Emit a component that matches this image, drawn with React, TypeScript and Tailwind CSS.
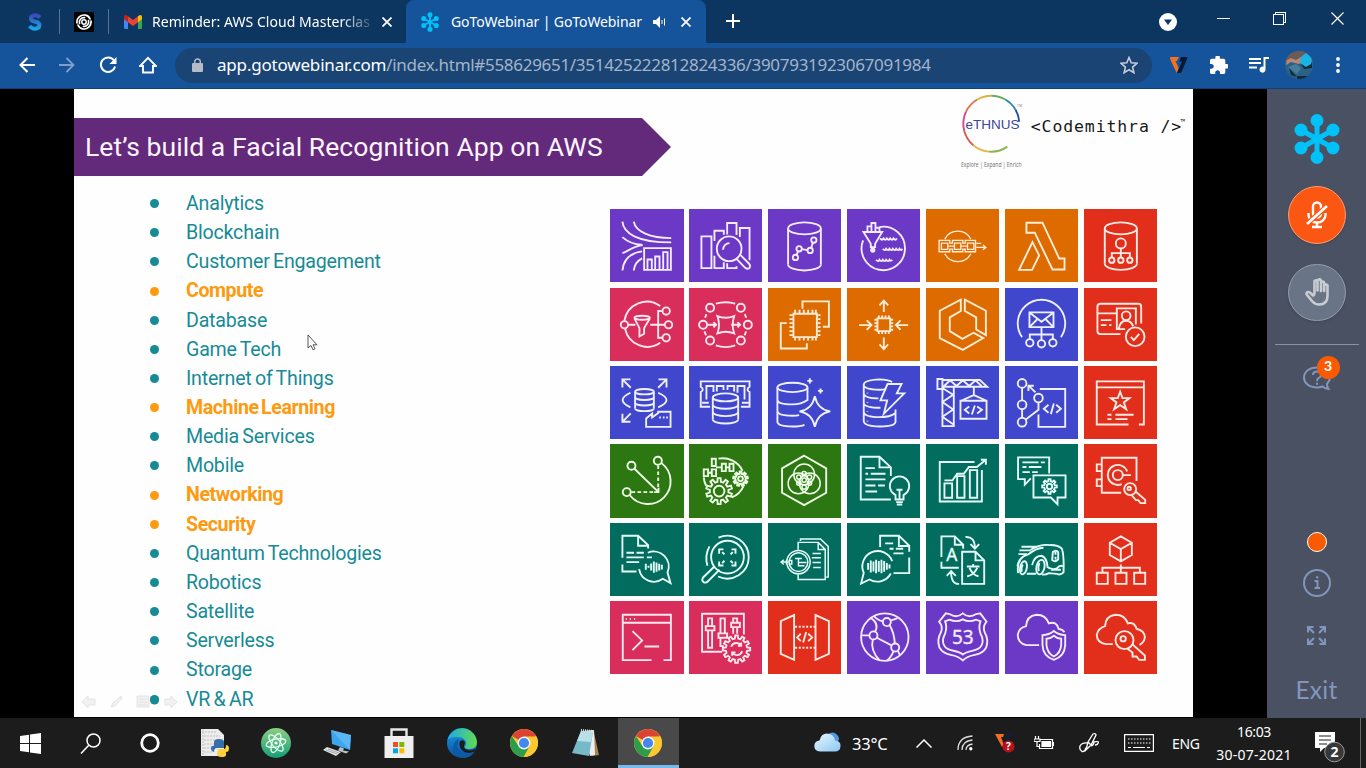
import React from "react";

type Tone = "violet" | "orange" | "red" | "pink" | "blue" | "green" | "teal";

const toneClass: Record<Tone, string> = {
  violet: "bg-[#6c38c6] text-[#f3ebff]",
  orange: "bg-[#dd6b00] text-[#ffedd8]",
  red: "bg-[#e12f1c] text-[#ffeae4]",
  pink: "bg-[#d92d5b] text-[#ffe8f0]",
  blue: "bg-[#4147cc] text-[#eef0ff]",
  green: "bg-[#2d7712] text-[#efffe8]",
  teal: "bg-[#026d5e] text-[#e6fffa]",
};

/** Outline of a toothed wheel. */
function gear(cx: number, cy: number, r: number, R: number, n: number) {
  const pts: string[] = [];
  const step = (Math.PI * 2) / n;
  for (let i = 0; i < n; i++) {
    const a = i * step - Math.PI / 2;
    const corners: [number, number][] = [
      [a - step * 0.3, r],
      [a - step * 0.18, R],
      [a + step * 0.18, R],
      [a + step * 0.3, r],
    ];
    corners.forEach(([t, d]) => pts.push(`${(cx + Math.cos(t) * d).toFixed(1)} ${(cy + Math.sin(t) * d).toFixed(1)}`));
  }
  return `M${pts.join("L")}Z`;
}

/** Database drum with ring lines. */
function Drum({ cx, top, rx, ry, h, rings = 0 }: { cx: number; top: number; rx: number; ry: number; h: number; rings?: number }) {
  const lines: React.ReactNode[] = [];
  for (let i = 1; i <= rings + 1; i++) {
    const y = top + (h * i) / (rings + 1);
    lines.push(<path key={i} d={`M${cx - rx} ${y} A${rx} ${ry} 0 0 0 ${cx + rx} ${y}`} />);
  }
  return (
    <>
      <ellipse cx={cx} cy={top} rx={rx} ry={ry} />
      <path d={`M${cx - rx} ${top}v${h}M${cx + rx} ${top}v${h}`} />
      {lines}
    </>
  );
}

function Dots({ at, r }: { at: [number, number][]; r: number }) {
  return (
    <>
      {at.map(([x, y]) => (
        <circle key={`${x}-${y}`} cx={x} cy={y} r={r} />
      ))}
    </>
  );
}

function Label({ x, y, size, children }: { x: number; y: number; size: number; children: React.ReactNode }) {
  return (
    <text x={x} y={y} fontSize={size} textAnchor="middle" fill="currentColor" stroke="currentColor" strokeWidth="1" fontFamily="Noto Sans, sans-serif">
      {children}
    </text>
  );
}

const P = ({ d }: { d: string }) => <path d={d} />;

const services: { name: string; tone: Tone; x: number; y: number; art: React.ReactNode }[] = [
  {
    name: "Kinesis", tone: "violet", x: 30, y: 28,
    art: (
      <>
        <P d="M67 66C70 100 110 128 213 128M101 66C106 96 150 115 213 115M67 112Q90 133 125 135M67 160C85 154 100 138 128 136M67 212C70 180 90 160 126 155M101 212C103 195 110 184 126 176" />
        <P d="M132 145h80v65h-80zM142 208v-29h13v29M165 208v-38h13v38M189 208v-51h13v51" />
      </>
    ),
  },
  {
    name: "Athena", tone: "violet", x: 270, y: 28,
    art: (
      <>
        <P d="M307 110h30v95h-30zM346 124V93h28v12M346 168v37h28v-18M384 104V70h28v36M384 190v15h28v-6M422 112V85h29v96" />
        <circle cx="390" cy="147" r="37" />
        <P d="M372 150a19 19 0 0 1 19-20M412 177l26 27q7 6 13 0q4-7-2-13l-27-27" />
      </>
    ),
  },
  {
    name: "Redshift", tone: "violet", x: 507, y: 28,
    art: (
      <>
        <Drum cx={616} top={86} rx={49} ry={18} h={108} />
        <Dots r={8} at={[[589, 173], [600, 147], [633, 152], [644, 121]]} />
        <P d="M592 166l5-12M608 148l17 3M636 145l5-16" />
      </>
    ),
  },
  {
    name: "Lake", tone: "violet", x: 741, y: 28,
    art: (
      <>
        <P d="M838 82A65 65 0 1 1 789 122" />
        <P d="M790 97h56l-21 35v10h-13v-10zM802 94V80h12v14M814 80V70h12v24M826 84h12v10M818 142v12" />
        <Dots r={5} at={[[818, 151]]} />
        <P d="M840 116q6 8 10 0q6 8 10 0q6 8 10 0q6 8 10 0q6 8 10 0M848 147q6 8 10 0q6 8 10 0q6 8 10 0q6 8 10 0q6 8 10 0q6 8 8 0M828 180q6 8 10 0q6 8 10 0q6 8 10 0q6 8 10 0q4 6 8 0" />
      </>
    ),
  },
  {
    name: "Managed Blockchain", tone: "orange", x: 138, y: 28,
    art: (
      <g strokeWidth="4">
        <P d="M194 118a44 44 0 0 1 78 0M194 162a44 44 0 0 0 78 0" />
        <P d="M177 122h32v8h8v-8h31v8h7v-8h31v34h-31v-8h-7v8h-31v-8h-8v8h-32z" />
        <P d="M184 130h19v19h-19zM223 130h19v19h-19zM262 130h19v19h-19zM203 139h20M242 139h20M288 143h28m-8-7l9 7-9 7M288 131h15" />
      </g>
    ),
  },
  {
    name: "Lambda", tone: "orange", x: 373, y: 25,
    art: <P d="M437 66h48l50 107h16v33h-36l-53-110h-25zM455 124l20 40-21 43h-39z" />,
  },
  {
    name: "Cloud Directory", tone: "red", x: 609, y: 28,
    art: (
      <>
        <Drum cx={719} top={86} rx={48} ry={18} h={106} />
        <Dots r={15} at={[[719, 131]]} />
        <Dots r={8} at={[[692, 181], [719, 181], [746, 181]]} />
        <P d="M719 146v26M692 172v-12h54v12" />
      </>
    ),
  },
  {
    name: "Pinpoint", tone: "pink", x: 30, y: 264,
    art: (
      <>
        <P d="M180 318A68 68 0 0 0 73 362M75 386A68 68 0 0 0 180 428" />
        <Dots r={11} at={[[73, 374], [198, 333], [205, 374], [198, 413]]} />
        <ellipse cx="126" cy="353" rx="23" ry="6" />
        <P d="M103 355l15 29v25l14-8v-17l17-29M84 374h22M150 374h44M187 333h-13v80h13" />
      </>
    ),
  },
  {
    name: "Step", tone: "pink", x: 270, y: 264,
    art: (
      <>
        <P d="M350 311Q380 302 408 311M350 436Q380 446 408 436M322 342l-4 11M437 342l4 11M321 406l-5-12M436 406l5-12" />
        <Dots r={12} at={[[333, 323], [425, 323], [312, 374], [446, 374], [333, 421], [425, 421]]} />
        <P d="M355 348Q379 358 405 348Q396 374 405 400Q379 390 355 400Q364 374 355 348zM326 374h25m-8-8l8 8-8 8M396 374h27m-8-8l8 8-8 8" />
      </>
    ),
  },
  {
    name: "EC2", tone: "orange", x: 507, y: 262,
    art: (
      <>
        <P d="M583 339h70v70h-70zM610 324v-22h79v76h-18M563 367h-18v76h78v-16" />
        <P d="M588 327v10M601 327v10M614 327v10M627 327v10M640 327v10M650 327v10M588 410v9M601 410v9M614 410v9M627 410v9M640 410v9M650 410v9M571 343h10M571 355h10M571 367h10M571 379h10M571 391h10M571 403h10M655 343h9M655 355h9M655 367h9M655 379h9M655 391h9M655 403h9" />
      </>
    ),
  },
  {
    name: "Auto Scaling", tone: "orange", x: 741, y: 262,
    art: (
      <>
        <P d="M832 353h38v38h-38zM851 334v-33m-13 13l13-14 13 14M851 410v34m-13-13l13 14 13-14M777 373h36m-13-14l14 14-14 14M924 373h-36m13-14l-14 14 14 14" />
        <P d="M836 344v8M846 344v8M856 344v8M866 344v8M836 392v8M846 392v8M856 392v8M866 392v8M823 357h8M823 367h8M823 377h8M823 387h8M871 357h8M871 367h8M871 377h8M871 387h8" />
      </>
    ),
  },
  {
    name: "ECS", tone: "orange", x: 138, y: 262,
    art: <P d="M242 297L179 330V412L248 447L309 412L280 396L247 414L209 391V350L242 331ZM254 297L317 330V403L288 386V350L254 331Z" />,
  },
  {
    name: "Simple Email", tone: "blue", x: 373, y: 265,
    art: (
      <>
        <P d="M424 412A71 71 0 1 1 540 412M446 338h72v44h-72zM446 338l36 28 36-28M446 382l25-25M518 382l-25-25M482 382v38M447 418v-14h69v14" />
        <Dots r={11} at={[[447, 429], [482, 432], [516, 429]]} />
      </>
    ),
  },
  {
    name: "Identity", tone: "red", x: 609, y: 262,
    art: (
      <>
        <P d="M718 400h-60q-9 0-9-9V318q0-9 9-9h113q9 0 9 9v50M649 338h56M732 385h-25v-62h57v48M659 358h32M659 373h17M684 373h7" />
        <P d="M713 385q3-25 22-25q15 0 21 17M749 408l9 10 16-19" />
        <Dots r={13} at={[[735, 345]]} />
        <Dots r={28} at={[[762, 408]]} />
      </>
    ),
  },
  {
    name: "Timestream", tone: "blue", x: 33, y: 498,
    art: (
      <>
        <P d="M70 562V538h24M70 538l25 25M202 562V538h-24M202 538l-25 25M70 641v24h24M70 665l25-25M94 578q-47 22 0 44M177 578q50 22 0 44M141 680v-25l18-15v12l18-13v-4h37v45z" />
        <Drum cx={136} top={575} rx={28} ry={8} h={50} rings={2} />
        <P d="M180 652h5M191 652h5M201 652h5" />
      </>
    ),
  },
  {
    name: "ElastiCache", tone: "blue", x: 270, y: 496,
    art: (
      <>
        <P d="M333 618h-28v-44q12-8 0-16v-16h146v16q-12 8 0 16v44h-26M309 606h20M428 606h20" />
        <P d="M322 596v-40h21v18M353 572v-16h20v12M385 568v-12h20v16M415 576v-20h21v40" />
        <Drum cx={379} top={590} rx={38} ry={12} h={66} rings={2} />
      </>
    ),
  },
  {
    name: "Aurora", tone: "blue", x: 507, y: 498,
    art: (
      <>
        <ellipse cx="580" cy="562" rx="45" ry="14" />
        <P d="M535 562v102q0 15 45 15q25 0 36-5M625 562v40M535 598q0 15 45 15q26 0 45-13M535 632q0 15 45 15q12 0 20-2" />
        <P d="M647 588q8 40 46 46q-38 6-46 46q-8-40-46-46q38-6 46-46zM632 535v15M624.500 542.500h15M664 565v15M656.500 572.500h15" />
      </>
    ),
  },
  {
    name: "DynamoDB", tone: "blue", x: 741, y: 498,
    art: (
      <>
        <P d="M876 546q-14-8-38-8q-47 2-47 16t47 15q10 0 20-2M791 554v110q2 15 48 15q47 0 47-15v-36M791 581q2 14 44 14M791 609q2 14 50 14M791 636q2 15 48 15q30 0 47-12" />
        <P d="M862 552h42l-14 28h22l-61 61 10-40h-20z" />
        <P d="M802 578v2M802 606v2M802 634v2M802 662v2" />
      </>
    ),
  },
  {
    name: "Cloud9", tone: "blue", x: 138, y: 496,
    art: (
      <>
        <P d="M172 535h15v30h-15zM187 538h112l22 20H187M192 556l18-17 19 17 19-17 19 17 19-17 18 17M187 558v118h34V558M187 562l32 20-32 22 32 22-32 22 32 22M281 560v24M243 600l38-17 38 17M241 600h78v54h-78z" />
        <P d="M267 617l-13 10 13 11M291 617l14 10-14 11M284 614l-9 27" />
      </>
    ),
  },
  {
    name: "Pipeline", tone: "blue", x: 373, y: 501,
    art: (
      <>
        <Dots r={13} at={[[424, 553], [424, 617], [424, 669], [473, 597]]} />
        <P d="M424 566v38M424 630v26M473 610v22l-38 29M464 580l-19-19M443 576v-16h16M477 570h76v113h-80v-37" />
        <P d="M503 617l-14 12 14 12M526 617l14 12-14 12M519 613l-9 32" />
      </>
    ),
  },
  {
    name: "Artifact", tone: "red", x: 609, y: 501,
    art: (
      <P d="M742 676h-95V547h141v129h-15M647 565h141M717 578l7 19h21l-17 13 7 20-18-12-18 12 7-20-17-13h21zM679 647h12M703 647h54M679 660h12M703 660h36" />
    ),
  },
  {
    name: "Route", tone: "green", x: 33, y: 12,
    art: (
      <>
        <Dots r={12} at={[[97, 77], [176, 62], [83, 156]]} />
        <P d="M106 86l72 70M178 143v13h-13M188 70A68 68 0 1 1 93 166" />
        <path strokeDasharray="11 7" d="M177 76v66M97 156h66" />
      </>
    ),
  },
  {
    name: "OpsWorks", tone: "green", x: 270, y: 12,
    art: (
      <>
        <P d="M338 56h12v22h-12zM314 88h13v20h-13zM338 88h13v20h-13zM368 71h12v22h-12zM391 71h12v22h-12z" />
        <P d="M358 56A66 66 0 0 1 430 92M314 112q1 14 7 25M433 138A66 66 0 0 1 398 172M351 82h16M328 98h10M380 82h10" />
        <P d={gear(360, 153, 28, 39, 10)} />
        <Dots r={16} at={[[360, 153]]} />
        <P d={gear(424, 116, 15, 22, 9)} />
        <Dots r={7} at={[[424, 116]]} />
      </>
    ),
  },
  {
    name: "Robotics", tone: "green", x: 507, y: 15,
    art: (
      <>
        <P d="M615 50l66 38v73l-66 37-66-37V88z" />
        <g strokeWidth="4.400">
          <Dots r={31} at={[[615, 106], [598, 133], [632, 133]]} />
          <Dots r={6.500} at={[[615, 104], [599, 114], [631, 114], [599, 132], [631, 132], [615, 144], [615, 123]]} />
        </g>
      </>
    ),
  },
  {
    name: "Personalize", tone: "teal", x: 741, y: 12,
    art: (
      <>
        <P d="M872 178h-90V50h56l34 32v26M838 50v32h34M796 84h28M796 101h8M812 101h44M796 118h60M796 136h30M834 136h20M796 154h35" />
        <P d="M886 178v-13q-17-10-17-27a29 29 0 0 1 58 0q0 17-17 27v13zM888 186h20M890 193h16M898 176v-27M889 149h18" />
      </>
    ),
  },
  {
    name: "Forecast", tone: "teal", x: 138, y: 12,
    art: (
      <P d="M283 66H179v118h126V90M193 130h23v43h-23zM231 108h22v65h-22zM269 90h22v83h-22zM193 121h24l14-20h20l15-20h24l26-21M302 59h15v15" />
    ),
  },
  {
    name: "Lex", tone: "teal", x: 375, y: 15,
    art: (
      <>
        <P d="M452 118l-18 19v-17h-20V55h93v48M427 70h48M482 70h12M427 84h12M446 84h38M427 99h22M456 99h17M460 109h96v66h-24v20l-20-20h-52z" />
        <P d={gear(508, 142, 16, 22, 8)} />
        <Dots r={8} at={[[508, 142]]} />
      </>
    ),
  },
  {
    name: "Secrets", tone: "red", x: 609, y: 17,
    art: (
      <>
        <P d="M720 163h-58V58h104v70M662 78h-15v20h15M662 123h-15v20h15M738 99A30 30 0 1 0 722 137M724 110h25M764 160l28 24v10h-14l-7-9-7 0-12-14" />
        <Dots r={15} at={[[710, 110]]} />
        <Dots r={18} at={[[747, 152]]} />
        <Dots r={5} at={[[744, 150]]} />
      </>
    ),
  },
  {
    name: "Transcribe", tone: "teal", x: 30, y: 252,
    art: (
      <>
        <P d="M67 356V290h47l30 28v10M114 290v30h30M67 376v21h42M79 341h23M109 341h22M79 355h52M140 355h15M79 369h38" />
        <P d="M143 341A45 45 0 0 1 202 400l9 32-23-13A45 45 0 0 1 117 390" />
        <P d="M137 374v18M145 380v6M153 373v21M161 367v34M169 370v28M177 374v20M185 377v14" />
      </>
    ),
  },
  {
    name: "Rekognition", tone: "teal", x: 270, y: 248,
    art: (
      <>
        <Dots r={49} at={[[385, 350]]} />
        <P d="M358 292A64 64 0 1 1 357 408M331 318Q316 346 325 376M345 379l-33 32q-6 9 3 15q7 2 12-4l34-34" />
        <P d="M360 340v-13h13M397 327h12v13M360 363v12h13M397 375h12v-12M369 335l7 7M401 335l-7 7M369 368l7-7M401 368l-7-7" />
      </>
    ),
  },
  {
    name: "Textract", tone: "teal", x: 507, y: 246,
    art: (
      <g strokeWidth="4.400">
        <P d="M597 326V304h60l21 21v90h-81v-16M604 300v-6h60l23 22v92h-7M657 304v21h21" />
        <Dots r={35} at={[[598, 363]]} />
        <Dots r={28} at={[[598, 363]]} />
        <P d="M640 337h25M638 350h27M640 364h25M642 379h23M588 352h20M598 352v22M600 364h22M596 374h20M546 363h22M554 356l-8 7 8 7M562 356v14M568 358h10v11h-10" />
      </g>
    ),
  },
  {
    name: "Polly", tone: "teal", x: 741, y: 250,
    art: (
      <>
        <P d="M840 322V288h56l31 30v18M896 288v31h31M927 353v47h-47M855 311h24M868 327h12M887 327h22M880 341h30" />
        <P d="M872 401A46 46 0 0 1 808 419l-25 12 8-32A46 46 0 1 1 876 364" />
        <P d="M804 370v20M812 362v36M820 365v30M828 360v40M836 364v32M844 360v40M852 364v32M860 370v20M868 374v12" />
      </>
    ),
  },
  {
    name: "Translate", tone: "teal", x: 138, y: 248,
    art: (
      <>
        <P d="M184 350V288h40l25 25v12M224 288v25h25M184 364v18h52M246 334h40l26 26v70h-66zM286 334v26h26" />
        <P d="M256 290q28-2 28 32m-13-11l13 14 13-14M237 430q-24 2-24-36m-13 12l13-14 14 14" />
        <P d="M260 378h38M279 371v7M268 382q8 20 27 26M291 382q-8 20-30 26" />
        <Label x={215} y={361} size={52}>A</Label>
      </>
    ),
  },
  {
    name: "DeepRacer", tone: "teal", x: 375, y: 248,
    art: (
      <>
        <P d="M424 319h46M418 330h34M415 341h26M452 328Q480 310 510 314Q535 314 545 325Q552 345 550 396Q540 406 530 400L506 398Q496 404 486 402M414 398Q408 352 444 342Q470 322 490 322M412 378q4-22 16-28" />
        <ellipse cx="430" cy="382" rx="10" ry="20" transform="rotate(12 430 382)" />
        <ellipse cx="481" cy="380" rx="12" ry="22" transform="rotate(12 481 380)" />
        <P d="M428 372q-6 10-3 22M478 368q-6 12-2 24M456 374Q462 346 484 346Q500 352 502 378M518 335q10-8 16 0v22q-8 10-18 2zM526 335v8M526 349v8M500 378q14 12 30 6q10-12 18-6M440 400h28M512 388h30" />
      </>
    ),
  },
  {
    name: "Organizations", tone: "red", x: 612, y: 248,
    art: (
      <P d="M722 288l33 19v37l-33 19-33-19v-37zM689 307l33 19 33-19M722 326v37M722 372v25M667 397v-15h112v15M650 397h33v33h-33zM706 397h33v33h-33zM762 397h33v33h-33z" />
    ),
  },
  {
    name: "CLI", tone: "pink", x: 33, y: 485,
    art: <P d="M157 662H71V526h144v136h-22M71 550h144M80 539h3M92 539h3M105 539h3M100 575l29 28-29 29M136 621h44" />,
  },
  {
    name: "Config", tone: "pink", x: 270, y: 485,
    art: (
      <>
        <P d="M369 637h-60V523h125v62M327 560v-23h12v23M327 573v52h12v-52M320 560h26v13h-26zM364 582v-45h13v45M364 595v25h10M358 582h26v13h-26zM402 550v-13h12v13M402 563v20M414 563v20M396 550h26v13h-26z" />
        <P d={gear(412, 629, 32, 41, 12)} />
        <P d="M396 622a17 17 0 0 1 30-4m0-9v10h-10M429 635a17 17 0 0 1-30 5m0 9v-10h10" />
      </>
    ),
  },
  {
    name: "API Gateway", tone: "red", x: 507, y: 485,
    art: (
      <>
        <P d="M545 545l40-18v134l-40-18zM689 545l-40-18v134l40-18z" />
        <path strokeDasharray="6 5" d="M588 562h60M588 625h60" />
        <P d="M605 583l-11 11 11 11M627 583l12 11-12 11M621 578l-9 31" />
      </>
    ),
  },
  {
    name: "CloudFront", tone: "violet", x: 741, y: 485,
    art: (
      <>
        <Dots r={71} at={[[854, 593]]} />
        <Dots r={12} at={[[820, 588], [860, 548], [885, 624]]} />
        <P d="M783 588h25M825 577Q838 552 812 536M830 595l44 23M868 557Q882 580 884 612M818 600Q810 632 838 662M870 544Q884 540 892 536M880 636Q872 655 860 664M848 546Q830 542 822 530M893 634l6 12" />
      </>
    ),
  },
  {
    name: "Route 53", tone: "violet", x: 138, y: 485,
    art: (
      <>
        <P d="M248 522Q230 538 208 524L197 522L177 547Q190 562 182 580Q170 600 178 624Q188 642 212 646Q236 650 248 663Q260 650 284 646Q308 642 318 624Q326 600 314 580Q306 562 319 547L300 522L288 524Q266 538 248 522Z" />
        <P d="M248 540Q230 550 208 541L195 546Q202 562 195 583Q184 602 192 618Q198 630 220 634Q240 638 248 645Q256 638 276 634Q298 630 304 618Q312 602 301 583Q294 562 301 546L288 541Q266 550 248 540Z" />
        <Label x={248} y={613} size={57}>53</Label>
      </>
    ),
  },
  {
    name: "Shield", tone: "violet", x: 378, y: 485,
    art: (
      <P d="M480 617H442Q416 612 416 586Q420 564 441 560Q442 530 472 526Q500 526 509 552Q532 544 538 568Q550 570 556 578M524 575q14 12 34 12v30q-2 34-34 44q-32-10-34-44v-30q20 0 34-12zM524 589q10 9 22 9v19q-2 24-22 34q-20-10-22-34v-19q12 0 22-9z" />
    ),
  },
  {
    name: "Cloud Key", tone: "red", x: 612, y: 483,
    art: (
      <>
        <P d="M698 612H678Q650 608 650 584Q654 564 675 558Q676 528 706 524Q734 524 743 550Q762 544 769 566Q794 572 794 592Q792 608 778 614M756 612l38 34v13h-17l-8-10h-12v-12l-15-11" />
        <Dots r={27} at={[[733, 600]]} />
        <Dots r={8} at={[[729, 596]]} />
      </>
    ),
  },
];

const topics: [string, boolean?][] = [
  ["Analytics"], ["Blockchain"], ["Customer Engagement"], ["Compute", true], ["Database"], ["Game Tech"],
  ["Internet of Things"], ["Machine Learning", true], ["Media Services"], ["Mobile"], ["Networking", true],
  ["Security", true], ["Quantum Technologies"], ["Robotics"], ["Satellite"], ["Serverless"], ["Storage"], ["VR & AR"],
];

function GoToMark({ className }: { className: string }) {
  return (
    <svg viewBox="0 0 46 50" className={className} fill="#00c2f8" stroke="#00c2f8">
      <path d="M23 8v34M7 16l32 18M39 16L7 34" strokeWidth="5" />
      <g stroke="none">
        <circle cx="23" cy="6.500" r="6.500" />
        <circle cx="23" cy="43.500" r="6.500" />
        <circle cx="7" cy="16" r="6.500" />
        <circle cx="39" cy="16" r="6.500" />
        <circle cx="7" cy="34" r="6.500" />
        <circle cx="39" cy="34" r="6.500" />
      </g>
    </svg>
  );
}

function Chrome({ className }: { className: string }) {
  return (
    <svg viewBox="0 0 28 28" className={className}>
      <circle cx="14" cy="14" r="14" fill="#fbc92f" />
      <path d="M14 14L1.900 7A14 14 0 0 1 26.100 7z" fill="#dc4335" />
      <path d="M1.900 7A14 14 0 0 0 13.500 28L19.500 17.500 14 14 8.500 17z" fill="#2d9d4b" />
      <path d="M14 7.500h12.300A14 14 0 0 1 14 28l5.700-10.500z" fill="#fbc92f" />
      <circle cx="14" cy="14" r="6.500" fill="#f5f5f5" />
      <circle cx="14" cy="14" r="5.100" fill="#4688ea" />
    </svg>
  );
}

function TabStrip() {
  return (
    <div className="flex h-[43px] items-center bg-[#0c355f] text-[12px] text-white">
      <svg viewBox="0 0 14 18" className="ml-[28px] h-[18px] w-[14px]">
        <defs>
          <linearGradient id="s" x2="0" y2="1">
            <stop offset="0" stopColor="#3a4bb8" />
            <stop offset="1" stopColor="#19a5e6" />
          </linearGradient>
        </defs>
        <path d="M12 4.500Q10 2 6.500 2.300Q2.500 3 3 6Q3.500 8 7 8.500Q11.500 9.500 11.500 12Q11 15.500 7 15.700Q4 15.800 1.500 13" fill="none" stroke="url(#s)" strokeWidth="4" />
      </svg>
      <div className="ml-[17px] h-[25px] w-px bg-[#5b7390]" />
      <div className="ml-[14px] flex h-[20px] w-[20px] items-center justify-center bg-black">
        <svg viewBox="0 0 16 16" className="h-4 w-4" fill="none" stroke="#fff" strokeWidth="1.700" strokeLinecap="round">
          <path d="M1 9A7 7 0 0 1 9.500 1.200Q13 2 14 5M15 7A7 7 0 0 1 6.500 14.800Q3 14 2 11" />
          <path d="M3.500 9.500A4.600 4.600 0 0 1 8.500 3.600M12.500 6.500A4.600 4.600 0 0 1 7.500 12.400" />
          <circle cx="8" cy="8" r="2.200" strokeWidth="1.500" />
        </svg>
      </div>
      <div className="ml-[14px] h-[25px] w-px bg-[#5b7390]" />
      <svg viewBox="0 0 18 14" className="ml-[15px] h-[14px] w-[18px]">
        <path d="M0 2v10.500Q0 14 1.500 14H4V4z" fill="#4285f4" />
        <path d="M18 2v10.500Q18 14 16.500 14H14V4z" fill="#34a853" />
        <path d="M14 1.200L15.500 .3Q18-.5 18 2.300V4l-4 3.200z" fill="#fbbc04" />
        <path d="M4 1.200L2.500 .3Q0-.5 0 2.300V4l4 3.200z" fill="#c5221f" />
        <path d="M4 1.200l5 3.800 5-3.800v6L9 11 4 7.200z" fill="#ea4335" />
      </svg>
      <div className="ml-[10px] w-[219px] overflow-hidden whitespace-nowrap font-['Noto_Sans',sans-serif] text-[14px] tracking-[0.040px] [mask-image:linear-gradient(to_right,black_86%,transparent_103%)]">
        Reminder: AWS Cloud Masterclas
      </div>
      <svg viewBox="0 0 10 10" className="ml-[11px] h-[10px] w-[10px]" stroke="#fff" strokeWidth="1.800">
        <path d="M.5 .5l9 9M9.500 .5l-9 9" />
      </svg>
      <div className="ml-[14px] flex h-full w-[300px] items-center rounded-t-[8px] bg-[#15539b]">
        <GoToMark className="ml-[15px] h-[20px] w-[18px]" />
        <span className="ml-[12px] w-[192px] whitespace-nowrap font-['Noto_Sans',sans-serif] text-[14px] tracking-[-0.090px]">GoToWebinar | GoToWebinar</span>
        <svg viewBox="0 0 13 12" className="ml-[10px] h-[12px] w-[13px]" fill="#fff">
          <path d="M0 4h3l4-4v12L3 8H0z" />
          <path d="M9 4v4M11.500 2.500v7" stroke="#fff" strokeWidth="1" />
        </svg>
        <svg viewBox="0 0 10 10" className="ml-[15px] h-[10px] w-[10px]" stroke="#fff" strokeWidth="1.800">
          <path d="M.5 .5l9 9M9.500 .5l-9 9" />
        </svg>
      </div>
      <svg viewBox="0 0 14 14" className="ml-[20px] mb-px h-[14px] w-[14px]" stroke="#fff" strokeWidth="2">
        <path d="M7 0v14M0 7h14" />
      </svg>
      <svg viewBox="0 0 18 18" className="ml-auto h-[18px] w-[18px]">
        <circle cx="9" cy="9" r="9" fill="#fff" />
        <path d="M5 6.500h8l-4 5.500z" fill="#0c355f" />
      </svg>
      <div className="ml-[40px] mb-[6px] h-px w-[13px] bg-white" />
      <svg viewBox="0 0 13 13" className="ml-[43px] mb-[6px] h-[13px] w-[13px]" fill="none" stroke="#fff" shapeRendering="crispEdges">
        <path d="M.5 2.500h10v10h-10zM2.500 2.500v-2h10v10h-2" />
      </svg>
      <svg viewBox="0 0 13 13" className="ml-[45px] mr-[22px] mb-[6px] h-[13px] w-[13px]" stroke="#fff" strokeWidth="1.200">
        <path d="M.5 .5l12 12M12.500 .5l-12 12" />
      </svg>
    </div>
  );
}

function Toolbar() {
  return (
    <div className="flex h-[46px] items-center border-b border-[#123f78] bg-[#15539b] pb-px">
      <svg viewBox="0 0 16 16" className="ml-[19px] h-4 w-4" fill="none" stroke="#fff" strokeWidth="2">
        <path d="M16 8H1.500M8.500 1L1.500 8l7 7" />
      </svg>
      <svg viewBox="0 0 16 16" className="ml-[24px] h-4 w-4" fill="none" stroke="#7f9fca" strokeWidth="1.800">
        <path d="M0 8h14.500M7.500 1l7 7-7 7" />
      </svg>
      <svg viewBox="0 0 18 18" className="ml-[24px] h-[18px] w-[18px]" fill="none" stroke="#fff" strokeWidth="2">
        <path d="M15 4.500A7.200 7.200 0 1 0 16.100 10.500" />
        <path d="M17.500 1v7h-7z" fill="#fff" stroke="none" />
      </svg>
      <svg viewBox="0 0 18 18" className="ml-[22px] h-[18px] w-[18px]" fill="none" stroke="#fff" strokeWidth="1.900">
        <path d="M1 10h3v6.500h10V10h3L9 1.800z" />
      </svg>
      <div className="ml-[18px] flex h-[35px] w-[977px] items-center rounded-full bg-[#1a4474]">
        <svg viewBox="0 0 11 14" className="ml-[17px] h-[14px] w-[11px]">
          <rect y="5" width="11" height="9" rx="1" fill="#b5bcc6" />
          <path d="M2.700 6V3.800a2.800 2.800 0 0 1 5.600 0V6" fill="none" stroke="#b5bcc6" strokeWidth="1.500" />
        </svg>
        <div className="ml-[14px] whitespace-nowrap font-['Noto_Sans',sans-serif] text-[17px] tracking-[-0.300px] text-[#a3b4c9]">
          <span className="tracking-[-0.190px] text-white">app.gotowebinar.com</span>/index.html#558629651/351425222812824336/3907931923067091984
        </div>
        <svg viewBox="0 0 18 18" className="ml-auto mr-[14px] h-[18px] w-[18px]" fill="none" stroke="#c6ccd5" strokeWidth="1.600">
          <path d="M9 1.500l2.200 5.300 5.700.5-4.300 3.800 1.300 5.600L9 13.700l-4.900 3 1.300-5.600L1.100 7.300l5.700-.5z" />
        </svg>
      </div>
      <svg viewBox="0 0 18 16" className="ml-[18px] h-4 w-[18px]">
        <path d="M0 1q0-1 1-1h8L7 4H5.500l3.200 7-2 5L.5 3z" fill="#f37021" />
        <path d="M11 0h5.500Q18 0 17 2l-5.500 13q-1 1.500-2.500 1H7l5-11.500h-2.500z" fill="#071a33" />
      </svg>
      <svg viewBox="2 2 20 20" className="ml-[22px] h-[18px] w-[18px]" fill="#fff">
        <path d="M20.500 11H19V7c0-1.100-.9-2-2-2h-4V3.500C13 2.120 11.880 1 10.500 1S8 2.120 8 3.500V5H4c-1.100 0-1.990.9-1.990 2v3.800H3.500c1.490 0 2.700 1.210 2.700 2.700s-1.210 2.700-2.700 2.700H2V20c0 1.100.9 2 2 2h3.800v-1.500c0-1.490 1.210-2.700 2.700-2.700 1.490 0 2.700 1.210 2.700 2.700V22H17c1.100 0 2-.9 2-2v-4h1.500c1.380 0 2.500-1.120 2.500-2.500S21.880 11 20.500 11z" />
      </svg>
      <svg viewBox="0 0 20 16" className="ml-[21px] h-4 w-5" fill="#fff">
        <path d="M0 1h12v2H0zM0 5h12v2H0zM0 9.500h8v2H0zM14.500 0H20v2h-3.500v10.500a3 3 0 1 1-2-2.700z" />
      </svg>
      <svg viewBox="0 0 28 28" className="ml-[16px] h-7 w-7">
        <clipPath id="av"><circle cx="14" cy="14" r="14" /></clipPath>
        <g clipPath="url(#av)">
          <path fill="#2d6288" d="M0 0h28v28H0z" />
          <path fill="#6d5a58" d="M0 0h28v11H0z" />
          <path fill="#ba8775" d="M2 9l4-2 5 2 5-3 3 4-5 3-8-2-5 3z" />
          <path fill="#102c3b" d="M16 13l11-1v5l-8 1zM4 17l8 9-6-2zM12 25h12v3H12z" />
          <path fill="#1ab4e4" d="M16 6l5-4 6 5-1 6-5 3-6-4z" />
          <path fill="#5587a4" d="M3 16l8-3 5 4-4 6z" opacity=".7" />
        </g>
      </svg>
      <svg viewBox="0 0 4 16" className="ml-[23px] h-4 w-1" fill="#fff">
        <circle cx="2" cy="2" r="1.900" /><circle cx="2" cy="8" r="1.900" /><circle cx="2" cy="14" r="1.900" />
      </svg>
    </div>
  );
}

function EthnusLogo() {
  const arcs: [number, number, string][] = [
    [55, 95, "#8fb64c"], [95, 130, "#e7b64a"], [130, 165, "#dc5a55"], [165, 205, "#cf4b86"], [205, 240, "#e1704c"],
    [240, 270, "#d9b540"], [270, 300, "#68ab62"], [300, 330, "#2b89ae"], [330, 356, "#274f99"],
  ];
  const at = (a: number) => {
    const t = (a * Math.PI) / 180;
    return `${(30.3 + 28 * Math.cos(t)).toFixed(2)} ${(28.7 + 28 * Math.sin(t)).toFixed(2)}`;
  };
  return (
    <svg viewBox="0 0 64 80" className="h-[80px] w-[64px] overflow-visible">
      {arcs.map(([a, b, c]) => (
        <path key={a} d={`M${at(a)}A28 28 0 0 1 ${at(b)}`} fill="none" stroke={c} strokeWidth="1.900" />
      ))}
      <text x="4.500" y="33.500" fontSize="12" textLength="54" lengthAdjust="spacingAndGlyphs" fill="#39479b" fontFamily="Liberation Sans, sans-serif">eTHNUS</text>
      <text x="56" y="12" fontSize="3.500" fill="#888" fontFamily="Liberation Sans, sans-serif">TM</text>
      <text x="0" y="72" fontSize="6.600" textLength="60.500" lengthAdjust="spacingAndGlyphs" fill="#6d6d6d" fontFamily="Open Sans, sans-serif">Explore | Expand | Enrich</text>
    </svg>
  );
}

function Slide() {
  return (
    <div className="relative flex h-full w-[1119px] flex-col bg-[#fefefe] font-['Roboto',sans-serif]">
      <div className="flex h-[99px]">
        <div className="mt-[29px] flex h-[58px] w-[597px] items-center bg-[#63297a] pl-[11px] [clip-path:polygon(0_0,568px_0,100%_50%,568px_100%,0_100%)]">
          <h1 className="whitespace-nowrap text-[26.500px] tracking-[0.070px] text-[#fbf4fd]">Let’s build a Facial Recognition App on AWS</h1>
        </div>
        <div className="ml-auto mr-[8px] flex pt-[6px]">
          <EthnusLogo />
          <div className="ml-[6px] flex h-[64px] items-center whitespace-nowrap font-['DejaVu_Sans_Mono',monospace] text-[16.500px] tracking-[0.880px] text-[#181818]">
            &lt;Codemithra /&gt;
            <span className="-ml-[2px] mb-[12px] text-[4px] tracking-[0]">TM</span>
          </div>
        </div>
      </div>
      <div className="flex">
        <ul className="w-[536px] pt-px text-[19.600px]">
          {topics.map(([name, hot]) => (
            <li key={name} className={hot ? "flex h-[29.170px] items-center text-[#fd9a10]" : "flex h-[29.170px] items-center text-[#168b96]"}>
              <span className="ml-[76px] h-[9px] w-[9px] rounded-full bg-current" />
              <span className={hot ? "ml-[27px] whitespace-nowrap font-bold tracking-[-0.420px] [word-spacing:-2px]" : "ml-[27px] whitespace-nowrap tracking-[-0.210px] [word-spacing:-1.200px]"}>{name}</span>
            </li>
          ))}
        </ul>
        <div className="ml-[0.300px] mt-[21.300px] grid h-[467px] grid-cols-[repeat(7,73.300px)] grid-rows-[repeat(6,73.200px)] gap-x-[5.600px] gap-y-[5.200px]">
          {services.map((s) => (
            <div key={s.name} className={toneClass[s.tone]}>
              <svg viewBox={`${s.x} ${s.y} 219 219`} className="h-full w-full" fill="none" stroke="currentColor" strokeWidth="5.600">
                {s.art}
              </svg>
            </div>
          ))}
        </div>
      </div>
      <svg viewBox="0 0 98 14" className="absolute left-[7px] top-[606px] h-[14px] w-[98px]" fill="#f1f1f1" stroke="#e4e4e4">
        <path d="M1 7l6-6v3h7v6H7v3z" />
        <path d="M30 12l2-4 8-7 1 2-7 8z" />
        <path d="M56 1h12v11H56zM58 4h9M58 7h9M58 10h9" />
        <path d="M96 7l-6-6v3h-6v6h6v3z" />
        <circle cx="73.500" cy="5" r="4.500" fill="#168b96" stroke="none" />
      </svg>
      <svg viewBox="0 0 11 17" className="absolute left-[233px] top-[245px] h-[17px] w-[11px]" fill="#fff" stroke="#444" strokeWidth=".9">
        <path d="M1 1v13l3-2.500 2 4.300 2-1-2-4h4z" />
      </svg>
    </div>
  );
}

function ControlPanel() {
  return (
    <aside className="flex w-[99px] flex-col items-center bg-[#495163]">
      <GoToMark className="mt-[25px] h-[50px] w-[46px]" />
      <button className="mt-[22px] flex h-[58px] w-[58px] items-center justify-center rounded-full border border-[#ff9c70] bg-[#fb5712] shadow">
        <svg viewBox="0 0 22 28" className="h-7 w-[22px]" fill="none" stroke="#fff" strokeWidth="2.400">
          <rect x="7" y="1.500" width="8" height="15" rx="4" />
          <path d="M2.500 12v2a8.500 7.500 0 0 0 17 0v-2M11 21v5M6 26h10" />
          <path d="M1 23L21 5" stroke="#fb5712" strokeWidth="5" />
          <path d="M1 23L21 5" strokeWidth="2.600" />
        </svg>
      </button>
      <button className="mt-[20px] flex h-[57px] w-[58px] items-center justify-center rounded-full border border-[#979fab] bg-[#6a7487] pb-[2px] shadow">
        <svg viewBox="0 0 24 28" className="h-7 w-6" fill="none" stroke="#c9ccd1" strokeWidth="2.600" strokeLinecap="round" strokeLinejoin="round">
          <path d="M9.500 14V3.500M9.500 3q2-1.500 3 .5v9M13 2q2-1.500 3 .5V13M16.500 4q2-1 2.700.7V13M19.500 7q2.800-1.200 3 .6V18q0 8.500-8.500 8.500Q10 26.500 7 23L1.700 16.500q-.5-2.500 1.500-2.500 1.500 0 2.800 1.500l2 2q1.500 0 1.500-3.500" />
        </svg>
      </button>
      <div className="mt-[23px] h-px w-[84px] bg-[#8b919d]" />
      <div className="relative mt-[21px] h-6 w-7">
        <svg viewBox="0 0 28 24" className="h-6 w-7" fill="none" stroke="#8296bc" strokeWidth="2">
          <path d="M14 1.500C6 1.500 1 6 1 11.500S6 21.500 14 21.500q3 0 5.500-1 2.500 2 6 2.500-1.500-2-1.500-5 3-3 3-6.500C27 6 21 1.500 14 1.500z" />
          <path d="M10 9q0-3.500 4-3.500T18 9q0 2-2.500 3.200Q14 13 14 15M14 16.800v2" />
        </svg>
        <div className="absolute -top-[10px] left-[14px] flex h-[23px] w-[23px] items-center justify-center rounded-full bg-[#fa5a00] pb-[5px] font-['Lato',sans-serif] text-[14px] font-bold text-white">3</div>
      </div>
      <div className="mt-[142px] h-5 w-5 rounded-full border border-white bg-[#fa5a00]" />
      <svg viewBox="0 0 28 28" className="mt-[17px] h-7 w-7" fill="none" stroke="#8296bc" strokeWidth="2">
        <circle cx="14" cy="14" r="13" />
        <path d="M11.500 12h3v6.500M11.500 19h5.500" />
        <circle cx="14.200" cy="8.300" r=".9" fill="#8296bc" strokeWidth="1" />
      </svg>
      <svg viewBox="0 0 19 19" className="mt-[29px] h-[19px] w-[19px]" fill="none" stroke="#8296bc" strokeWidth="2.200">
        <path d="M1 6.500V1h5.500M1 1l6 6M18 6.500V1h-5.500M18 1l-6 6M1 12.500v5.500h5.500M1 18l6-6M18 12.500v5.500h-5.500M18 18l-6-6" />
      </svg>
      <div className="mt-[28px] font-['Lato',sans-serif] text-[24.500px] leading-[34px] tracking-[0.300px] text-[#8296bc]">Exit</div>
    </aside>
  );
}

function Taskbar() {
  const cell = "flex h-full w-[61px] shrink-0 items-center justify-center";
  return (
    <footer className="flex h-[50px] items-center bg-[#1c1c1c] text-white">
      <div className="flex h-full w-[60px] items-center justify-center">
        <svg viewBox="0 0 21 21" className="h-[21px] w-[21px]" fill="#fff">
          <path d="M0 3l9-1.300V10H0zM10 1.500L21 0v10H10zM0 11h9v8.300L0 18zM10 11h11v10l-11-1.500z" />
        </svg>
      </div>
      <div className="flex h-full w-[60px] items-center justify-center">
        <svg viewBox="0 0 21 21" className="h-[21px] w-[21px]" fill="none" stroke="#fff" strokeWidth="1.500">
          <circle cx="13.500" cy="7.500" r="6.500" />
          <path d="M9 12L1 20.500" />
        </svg>
      </div>
      <div className="flex h-full w-[60px] items-center justify-center">
        <svg viewBox="0 0 20 20" className="h-5 w-5"><circle cx="10" cy="10" r="8.300" fill="none" stroke="#fff" strokeWidth="2.800" /></svg>
      </div>
      <div className={`${cell} pl-[8px]`}>
        <svg viewBox="0 0 28 30" className="h-[30px] w-7">
          <path d="M0 1h17l6 6v21H0z" fill="#ececec" />
          <path d="M2 1v27M1 4h15M3 8h16M3 12h16M3 16h12M3 20h9M3 24h9" stroke="#b5b5b5" strokeWidth=".8" strokeDasharray="2 1" />
          <path d="M13 18v-4q0-3 5-3t5 3v6h-7q-3 0-3 4-3-1-3-4t4-2z" fill="#3571a8" />
          <path d="M17 22v-1h6q2 0 2-4 3 0 3 3.500T25 24v3q0 2-4.500 2T16 26z" fill="#ffd03c" />
        </svg>
      </div>
      <div className={`${cell} pl-[9px]`}>
        <svg viewBox="0 0 30 30" className="h-[30px] w-[30px]">
          <defs><linearGradient id="atom" x2="0" y2="1"><stop stopColor="#8cce83" /><stop offset="1" stopColor="#15a077" /></linearGradient></defs>
          <circle cx="15" cy="15" r="15" fill="url(#atom)" />
          <g fill="none" stroke="#e8fff4" strokeWidth="1.300">
            <ellipse cx="15" cy="15" rx="4" ry="10" transform="rotate(20 15 15)" />
            <ellipse cx="15" cy="15" rx="4" ry="10" transform="rotate(78 15 15)" />
            <ellipse cx="15" cy="15" rx="4" ry="10" transform="rotate(-40 15 15)" />
          </g>
          <circle cx="15" cy="15" r="1.600" fill="#fff" />
        </svg>
      </div>
      <div className={`${cell} pl-[8px]`}>
        <svg viewBox="0 0 28 26" className="h-[26px] w-7">
          <path d="M8 0l20 5-1 15L9 14z" fill="#3da5ee" />
          <path d="M8 0l20 5-1 15z" fill="#6fc2fa" opacity=".6" />
          <path d="M17 17l4 1.500-1 2 6 1-3 2-8-3z" fill="#b7c2cc" />
          <path d="M4 17l14 5-5 4-13-6z" fill="#dfe5ea" />
          <path d="M5 19l11 4M3 20l11 4" stroke="#8f989f" strokeWidth=".8" />
        </svg>
      </div>
      <div className={`${cell} pl-[11px]`}>
        <svg viewBox="0 0 30 30" className="h-[30px] w-[30px]">
          <path d="M7.500 10V1.500h15V10" fill="none" stroke="#e9e9e9" strokeWidth="2.400" />
          <path d="M.5 8h29v22H.5z" fill="#efefef" />
          <path d="M9 14h5v5H9z" fill="#f25022" /><path d="M15.300 14h5v5h-5z" fill="#7fba00" />
          <path d="M9 20.300h5v5H9z" fill="#00a4ef" /><path d="M15.300 20.300h5v5h-5z" fill="#ffb900" />
        </svg>
      </div>
      <div className={`${cell} pl-[15px]`}>
        <svg viewBox="0 0 30 30" className="h-[30px] w-[30px]">
          <defs>
            <linearGradient id="e1"><stop stopColor="#1ca8e8" /><stop offset="1" stopColor="#61dc4e" /></linearGradient>
            <linearGradient id="e2" x2="0" y2="1"><stop stopColor="#1b9de2" /><stop offset="1" stopColor="#0c4ea5" /></linearGradient>
          </defs>
          <circle cx="15" cy="15" r="15" fill="url(#e2)" />
          <path d="M.5 12A15 15 0 0 1 30 14q0 7-7.500 7-4.500 0-5-2 2-2 1.500-5Q17 9 11 9 4 8.500 .5 12z" fill="url(#e1)" />
          <path d="M11 14q-3 10 9 12 4 0 7.500-2-4 6-12 6Q6 28 6 19q1-6 6-8z" fill="#0c59a4" />
          <path d="M12.500 14q1.500-2.500 4-1.500 2.500 2 .5 5-1 4 5.500 5 4-.3 6.500-2l-1.500 3q-5 2.500-10 .5-6-3.500-5-10z" fill="#1c1c1c" />
        </svg>
      </div>
      <div className={`${cell} pl-[16px]`}><Chrome className="h-7 w-7" /></div>
      <div className={`${cell} pl-[18px]`}>
        <svg viewBox="0 0 27 28" className="h-7 w-[27px]">
          <path d="M22 4l5 22-7 1z" fill="#a78450" />
          <path d="M10 2l12-1 1 25-5 1z" fill="#ecefef" />
          <path d="M9 2l12 1-4 24L0 24z" fill="#76b9c7" />
          <path d="M9 2l12 1-2 10L5 12z" fill="#b8e0e6" />
          <path d="M9 1l13 1" stroke="#e0e0e0" strokeWidth="2" strokeDasharray="1 1" />
        </svg>
      </div>
      <div className="ml-[11px] flex h-full w-[61px] items-center justify-center border-b-[3px] border-[#76b9ed] bg-[#494949] pr-px pt-[3px]">
        <Chrome className="h-7 w-7" />
      </div>

      <div className="ml-auto flex h-full items-center font-['Noto_Sans',sans-serif] text-[15px]">
        <svg viewBox="0 0 27 20" className="mb-[2px] h-5 w-[27px]">
          <defs><linearGradient id="cl" x2="1" y2="1"><stop stopColor="#e8f7ff" /><stop offset="1" stopColor="#8cc8f2" /></linearGradient></defs>
          <path d="M14 2q6-4 10 2 2 3 0 5h-8z" fill="#4e9ae0" />
          <path d="M6 19.500Q0 19 .3 13.500.8 9 5.500 8.500 7 1.500 13 1.500q7 .5 8 7 6 .5 5.500 6-.5 5-5.500 5z" fill="url(#cl)" />
        </svg>
        <span className="ml-[11px] w-[38px] whitespace-nowrap pt-[2px] text-[16.500px] tracking-[-0.250px]">33°C</span>
        <svg viewBox="0 0 16 9" className="ml-[26px] h-[9px] w-4" fill="none" stroke="#fff" strokeWidth="1.500"><path d="M.5 8.500L8 1l7.500 7.500" /></svg>
        <svg viewBox="0 0 16 16" className="ml-[25px] h-4 w-4" fill="none" stroke="#ddd" strokeWidth="1.300">
          <path d="M1 15Q1 2 15.500 1M5 15Q5 6 15.500 5M9 15q0-5 6.500-6" />
          <circle cx="13.800" cy="13.800" r="1.700" fill="#fff" stroke="none" />
        </svg>
        <svg viewBox="0 0 20 19" className="ml-[22px] h-[19px] w-5">
          <path d="M0 0h9L8 3H6l3 8-2 2z" fill="#f36d21" /><path d="M11 0h6l-3 8-3-3z" fill="#111f3c" />
          <circle cx="13.500" cy="12.500" r="6" fill="#b5121b" />
          <text x="13.500" y="16" fontSize="10" fontWeight="bold" textAnchor="middle" fill="#fff">?</text>
        </svg>
        <svg viewBox="0 0 20 14" className="ml-[19px] h-[14px] w-5" fill="none" stroke="#fff" strokeWidth="1.200">
          <path d="M6 3.500h12.500v9H5.500V8M18.500 6.500h1v3h-1" />
          <path d="M8 5.500h8.500v5H8z" fill="#fff" />
          <path d="M1.500 0v3M4.500 0v3M0 3h6v2.500H0zM3 5.500v5h2" />
        </svg>
        <svg viewBox="0 0 20 20" className="ml-[25px] h-5 w-5" fill="none" stroke="#fff" strokeWidth="1.300">
          <path d="M7 17L9 9l5-8q3-1 3 1l-5 10zM9 9l3 3M9 10Q3 9 1 13q-1 4 2 5.500 3 .5 4-4M12 13q3-1 3-4 4-1 4.500 0-.5 3-3.500 3" />
        </svg>
        <svg viewBox="0 0 30 18" className="ml-[25px] h-[18px] w-[30px]" fill="none" stroke="#fff" strokeWidth="1.200">
          <path d="M.6.6h28.800v16.800H.6z" /><path d="M4 5h23M4 9h23" strokeDasharray="1.500 1.500" /><path d="M4 13.500h3M9 13.500h12M23 13.500h3" />
        </svg>
        <span className="ml-[18px] w-[29px] text-[14px] tracking-[-0.300px]">ENG</span>
        <div className="ml-[14px] w-[78px] whitespace-nowrap text-center text-[14px] leading-[23px]">
          <div className="tracking-[-0.350px]">16:03</div>
          <div className="tracking-[0.220px]">30-07-2021</div>
        </div>
        <svg viewBox="0 0 32 32" className="ml-[22px] mt-[8px] h-8 w-8">
          <path d="M0 1h20v16H9l-4 4v-4H0z" fill="#fff" />
          <path d="M4 5h12M4 9h12M4 13h8" stroke="#1c1c1c" strokeWidth="1.200" />
          <circle cx="19.500" cy="21" r="9.800" fill="#383838" stroke="#999" />
          <text x="19.500" y="26" fontSize="14" fontWeight="bold" textAnchor="middle" fill="#fff">2</text>
        </svg>
        <div className="ml-[13px] mr-[5px] h-full w-px bg-[#666]" />
      </div>
    </footer>
  );
}

export default function App() {
  return (
    <div className="flex h-[768px] w-[1366px] flex-col overflow-hidden bg-black">
      <TabStrip />
      <Toolbar />
      <main className="flex h-[629px] justify-between">
        <div className="flex h-[628px] flex-1 justify-center">
          <Slide />
        </div>
        <ControlPanel />
      </main>
      <Taskbar />
    </div>
  );
}
